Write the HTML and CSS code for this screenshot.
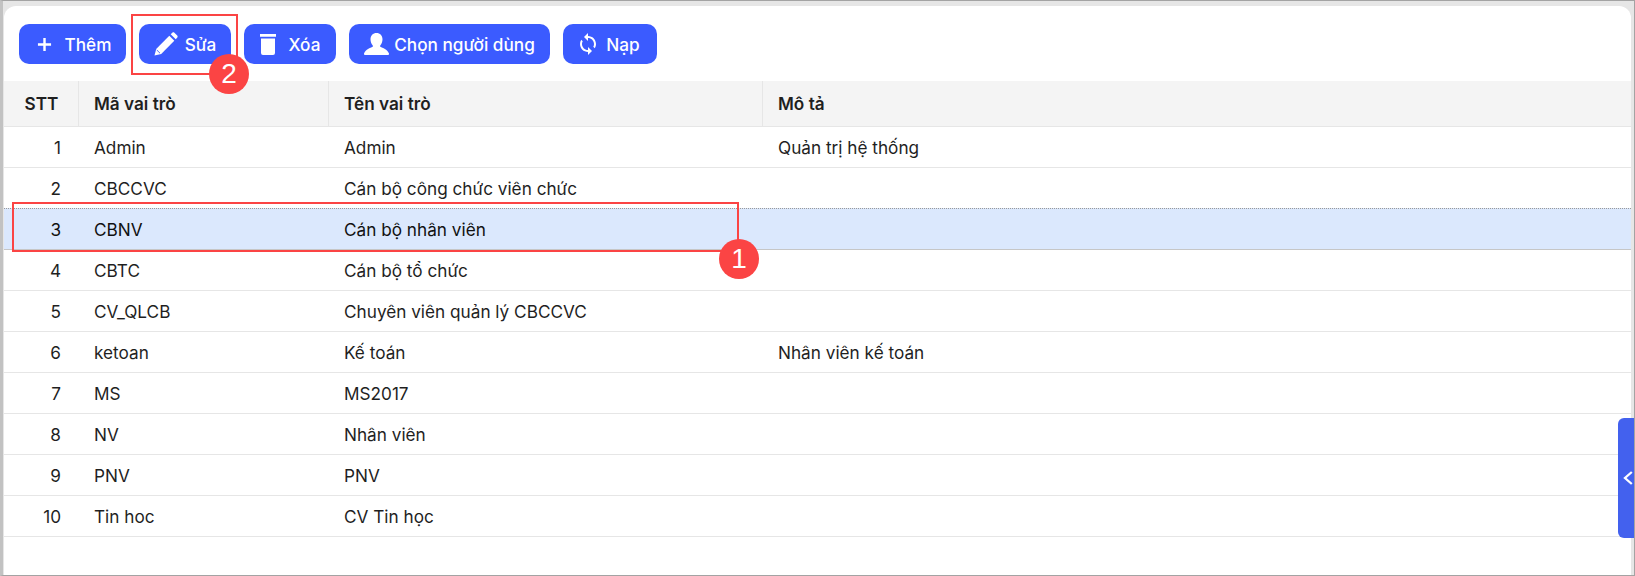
FILE: index.html
```html
<!DOCTYPE html>
<html lang="vi">
<head>
<meta charset="utf-8">
<title>Vai trò</title>
<link rel="stylesheet" href="styles.css">
</head>
<body>
<div class="frame">
  <main class="panel">
    <div class="toolbar">
      <button class="btn btn-them"><svg class="ic ic-plus" viewBox="0 0 16 16"><path d="M8 1v14M1 8h14" stroke="#fff" stroke-width="2.6" fill="none"/></svg><span>Thêm</span></button>
      <button class="btn btn-sua"><svg class="ic ic-pen" viewBox="0 0 24 24"><path d="M0.500 23.500l1.700-6.600L15.300 3.700l5 5L7.200 21.900 0.500 23.500z" fill="#fff"/><path d="M16.700 2.300l1.600-1.500c.6-.6 1.500-.6 2.100 0l2.800 2.800c.6.600.6 1.500 0 2.100l-1.500 1.600-5-5z" fill="#fff"/><path d="M2.800 18l3.200 3.200" stroke="#3b5bff" stroke-width="0.900"/></svg><span>Sửa</span></button>
      <button class="btn btn-xoa"><svg class="ic ic-trash" viewBox="0 0 16 21"><path d="M0 0h16v2.800H0zM1 4.500h14v14.500a2 2 0 0 1-2 2H3a2 2 0 0 1-2-2z" fill="#fff"/></svg><span>Xóa</span></button>
      <button class="btn btn-chon"><svg class="ic ic-user" viewBox="0 0 25 22"><path d="M12.500 0c3.600 0 6 2.600 6 6.300 0 2.600-.9 4.700-2.300 6.100v1.400c2.800 1.100 6.900 2.700 8.800 6.700.2.500-.1 1.500-.9 1.500H.9c-.8 0-1.100-1-.9-1.500 1.900-4 6-5.600 8.800-6.700v-1.400C7.400 11 6.500 8.900 6.500 6.300 6.500 2.600 8.900 0 12.500 0z" fill="#fff"/></svg><span>Chọn người dùng</span></button>
      <button class="btn btn-nap"><svg class="ic ic-sync" viewBox="4 1 16 22"><path d="M12 4V1L8 5l4 4V6c3.310 0 6 2.690 6 6 0 1.010-.25 1.970-.7 2.800l1.460 1.460C19.540 15.030 20 13.570 20 12c0-4.420-3.580-8-8-8zm0 14c-3.310 0-6-2.690-6-6 0-1.010.25-1.970.7-2.800L5.240 7.740C4.460 8.970 4 10.430 4 12c0 4.420 3.580 8 8 8v3l4-4-4-4v3z" fill="#fff"/></svg><span>Nạp</span></button>
    </div>
    <div class="table">
      <div class="row head"><div class="c stt">STT</div><div class="c ma">Mã vai trò</div><div class="c ten">Tên vai trò</div><div class="c mota">Mô tả</div></div>
      <div class="row"><div class="c stt">1</div><div class="c ma">Admin</div><div class="c ten">Admin</div><div class="c mota">Quản trị hệ thống</div></div>
      <div class="row"><div class="c stt">2</div><div class="c ma">CBCCVC</div><div class="c ten">Cán bộ công chức viên chức</div><div class="c mota"></div></div>
      <div class="row selected"><div class="c stt">3</div><div class="c ma">CBNV</div><div class="c ten">Cán bộ nhân viên</div><div class="c mota"></div></div>
      <div class="row"><div class="c stt">4</div><div class="c ma">CBTC</div><div class="c ten">Cán bộ tổ chức</div><div class="c mota"></div></div>
      <div class="row"><div class="c stt">5</div><div class="c ma">CV_QLCB</div><div class="c ten">Chuyên viên quản lý CBCCVC</div><div class="c mota"></div></div>
      <div class="row"><div class="c stt">6</div><div class="c ma">ketoan</div><div class="c ten">Kế toán</div><div class="c mota">Nhân viên kế toán</div></div>
      <div class="row"><div class="c stt">7</div><div class="c ma">MS</div><div class="c ten">MS2017</div><div class="c mota"></div></div>
      <div class="row"><div class="c stt">8</div><div class="c ma">NV</div><div class="c ten">Nhân viên</div><div class="c mota"></div></div>
      <div class="row"><div class="c stt">9</div><div class="c ma">PNV</div><div class="c ten">PNV</div><div class="c mota"></div></div>
      <div class="row"><div class="c stt">10</div><div class="c ma">Tin hoc</div><div class="c ten">CV Tin học</div><div class="c mota"></div></div>
    </div>
  </main>
  <div class="side-tab"><svg class="chev" viewBox="0 0 10 14"><path d="M8.800 1L2 7l6.800 6" stroke="#fff" stroke-width="2.300" fill="none"/></svg></div>
  <div class="mark mark-row"></div>
  <div class="mark mark-btn"></div>
  <div class="badge badge-1">1</div>
  <div class="badge badge-2">2</div>
</div>
</body>
</html>
```
FILE: styles.css
```css
* { box-sizing: border-box; }
html, body { margin: 0; padding: 0; }
body { width: 1635px; height: 576px; overflow: hidden; font-family: Inter, "Liberation Sans", sans-serif; font-size: 17.2px; color: #1f1f1f; }
.frame { position: relative; width: 1635px; height: 576px; background: #e6e6e6; border: 1px solid #a3a3a3; border-left: 3px solid #c2c2c2; border-right: 1px solid #a3a3a3; padding: 5px 0 0 1px; }
.panel { width: 1627px; height: 569px; background: #fff; border-radius: 12px 12px 0 0; overflow: hidden; }
.toolbar { display: flex; gap: 13px; padding: 18px 0 17px 15px; height: 75px; }
.btn { height: 40px; border: 0; border-radius: 10px; background: #3b5bff; color: #fff; font: 500 17.2px Inter, "Liberation Sans", sans-serif; display: flex; align-items: center; justify-content: center; padding: 0; }
.btn-them { width: 107px; gap: 13px; padding-left: 3px; }
.btn-sua { width: 92px; gap: 7px; }
.btn-xoa { width: 92px; gap: 13px; }
.btn-chon { width: 201px; gap: 5px; }
.btn-nap { width: 94px; gap: 10px; }
.ic { display: block; flex: none; }
.ic-plus { width: 15px; height: 15px; }
.ic-pen { width: 24px; height: 24px; }
.ic-trash { width: 16px; height: 21px; }
.ic-user { width: 25px; height: 22px; }
.ic-sync { width: 16px; height: 22px; }
.row { display: grid; grid-template-columns: 75px 250px 434px 1fr; height: 41px; border-bottom: 1px solid #e6e6e6; align-items: center; }
.head { height: 46px; background: #f4f4f4; font-weight: 600; }
.head .c { height: 100%; display: flex; align-items: center; border-right: 1px solid #e6e6e6; }
.head .mota { border-right: 0; }
.c { padding-left: 15px; }
.c.stt { padding: 0 18px 0 0; text-align: right; justify-content: flex-end; }
.head .c.stt { justify-content: center; padding: 0 0 0 1px; }
.selected { background: #dbe8fd; border-top: 1px dotted #9a9a9a; border-bottom: 1px solid #c6c6c6; margin-top: -1px; height: 42px; color: #111; }
.side-tab { position: absolute; left: 1615px; top: 417px; width: 16px; height: 120px; background: #4361ee; border-radius: 6px 0 0 6px; display: flex; align-items: center; justify-content: flex-end; }
.chev { width: 10px; height: 14px; margin-right: 1px; }
.mark { position: absolute; border: 2px solid #fb4444; }
.mark-row { left: 9px; top: 201px; width: 727px; height: 50px; }
.mark-btn { left: 128px; top: 13px; width: 107px; height: 61px; }
.badge { position: absolute; width: 40px; height: 40px; border-radius: 50%; background: #fb4444; color: #fff; font: 400 28px/40px "Liberation Sans", sans-serif; text-align: center; }
.badge-1 { left: 716px; top: 238px; }
.badge-2 { left: 206px; top: 53px; }
```
